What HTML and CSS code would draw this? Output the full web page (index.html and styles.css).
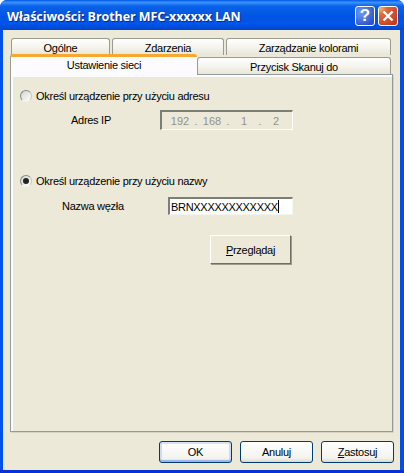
FILE: index.html
```html
<!DOCTYPE html>
<html lang="pl">
<head>
    <meta charset="UTF-8">
    <title>Właściwości: Brother MFC-xxxxxx LAN</title>
    <link rel="stylesheet" href="styles.css">
</head>
<body>
    <div class="window">
        <div class="titlebar">
            <span class="title">Właściwości: Brother MFC-xxxxxx LAN</span>
            <div class="title-buttons">
                <div class="cap-btn cap-help">?</div>
                <div class="cap-btn cap-close">
                    <svg width="14" height="14" viewBox="0 0 14 14"><path d="M2.5 2.5 L11.5 11.5 M11.5 2.5 L2.5 11.5" stroke="#fff" stroke-width="2.4" fill="none"/></svg>
                </div>
            </div>
        </div>
        <div class="client">
            <div class="tabs">
                <div class="tab-row back">
                    <div class="tab tab-general">Ogólne</div>
                    <div class="tab tab-events">Zdarzenia</div>
                    <div class="tab tab-colors">Zarządzanie kolorami</div>
                </div>
                <div class="tab-row front">
                    <div class="tab tab-network active">Ustawienie sieci</div>
                    <div class="tab tab-scan">Przycisk Skanuj do</div>
                </div>
            </div>
            <div class="panel">
                <div class="radio-row first">
                    <span class="radio"></span>
                    <span>Określ urządzenie przy użyciu adresu</span>
                </div>
                <div class="field-row ip-row">
                    <span class="field-label">Adres IP</span>
                    <div class="ip-box">
                        <span>192</span><i>.</i><span>168</span><i>.</i><span>1</span><i>.</i><span>2</span>
                    </div>
                </div>
                <div class="radio-row second">
                    <span class="radio checked"></span>
                    <span>Określ urządzenie przy użyciu nazwy</span>
                </div>
                <div class="field-row name-row">
                    <span class="field-label">Nazwa węzła</span>
                    <div class="name-box">BRNXXXXXXXXXXXX<span class="caret"></span></div>
                </div>
                <div class="browse-row">
                    <button class="btn browse"><u>P</u>rzeglądaj</button>
                </div>
            </div>
            <div class="footer">
                <button class="btn default">OK</button>
                <button class="btn">Anuluj</button>
                <button class="btn"><u>Z</u>astosuj</button>
            </div>
        </div>
    </div>
</body>
</html>
```

FILE: styles.css
```css
* {
    box-sizing: border-box;
    margin: 0;
    padding: 0;
}

body {
    width: 404px;
    height: 473px;
    overflow: hidden;
    font-family: "Liberation Sans", Arial, sans-serif;
    font-size: 11px;
    letter-spacing: -0.28px;
    color: #000;
}

.window {
    width: 404px;
    height: 473px;
    display: flex;
    flex-direction: column;
    background: #0050ea;
    border-bottom: 3px solid #0831d9;
    border-radius: 7px 7px 0 0;
    overflow: hidden;
}

.titlebar {
    height: 30px;
    flex: none;
    display: flex;
    align-items: center;
    justify-content: space-between;
    padding: 0 6px 0 7px;
    background: linear-gradient(to bottom, #0058e6 0%, #3a93ff 8%, #0a62e8 20%, #0054e3 55%, #0055eb 80%, #0046c8 100%);
}

.title {
    color: #fff;
    font-family: "Open Sans", "Liberation Sans", sans-serif;
    font-weight: 700;
    font-size: 12.5px;
    letter-spacing: -0.08px;
    padding-top: 2px;
    text-shadow: 1px 1px 0 #0a2a8c;
}

.title-buttons {
    display: flex;
    gap: 3px;
    padding-top: 1px;
}

.cap-btn {
    width: 20px;
    height: 20px;
    border: 1px solid #fff;
    border-radius: 3px;
    display: flex;
    align-items: center;
    justify-content: center;
}

.cap-help {
    background: radial-gradient(circle at 30% 30%, #6f9bf0, #2a55cf 80%);
    color: #fff;
    font-weight: 700;
    font-size: 17px;
    letter-spacing: 0;
}

.cap-close {
    background: radial-gradient(circle at 10% 10%, #f5b06a 0, #e2683f 25%, #c83d1c 85%);
}

.client {
    flex: 1;
    margin: 0 4px 0 3px;
    background: #ece9d8;
    padding: 8px 7px 0 7px;
    display: flex;
    flex-direction: column;
}

.tab-row {
    display: flex;
    position: relative;
}

.back {
    height: 17px;
    padding-left: 1px;
    gap: 2px;
}

.front {
    height: 19px;
}

.tab {
    text-align: center;
    background: linear-gradient(to bottom, #fff, #f3f2ea 60%, #e8e6d8);
    border: 1px solid #9c9b8f;
    border-bottom: none;
    border-radius: 3px 3px 0 0;
    padding-top: 2px;
    line-height: 14px;
}

.tab-general { width: 99px; }
.tab-events { width: 112px; }
.tab-colors { width: 165px; }
.tab-network { width: 187px; }
.tab-scan { width: 194px; margin-top: 2px; }

.tab.active {
    background: #fcfcfe;
    border-top: 3px solid #f7a92f;
    border-left-color: #9c9b8f;
    border-right: none;
    margin-top: -1px;
    height: 21px;
    padding-top: 1px;
    position: relative;
    z-index: 1;
}

.panel {
    width: 383px;
    height: 358px;
    flex: none;
    border: 1px solid #919b9c;
    background: #ece9d8;
    box-shadow: inset 2px 2px 0 #fcfcfe, 1px 1px 0 #d6d3c2;
    padding: 0 0 0 9px;
    display: flex;
    flex-direction: column;
}

.radio-row {
    display: flex;
    align-items: center;
    gap: 4px;
    height: 14px;
}

.radio-row.first { margin-top: 14px; }
.radio-row.second { margin-top: 44px; }

.radio {
    position: relative;
    width: 12px;
    height: 12px;
    border-radius: 50%;
    border: 1px solid;
    border-color: #7f8a90 #c8c6ba #f4f3ec #7f8a90;
    background: linear-gradient(135deg, #d8d5c8, #fff);
    flex: none;
}

.radio.checked::after {
    content: "";
    position: absolute;
    left: 2px;
    top: 2px;
    width: 6px;
    height: 6px;
    border-radius: 50%;
    background: #222;
}

.field-row {
    display: flex;
    align-items: center;
}

.ip-row {
    margin-top: 7px;
    padding-left: 51px;
}

.ip-row .field-label { width: 89px; }

.ip-box {
    width: 133px;
    height: 20px;
    border: 2px solid #7b7f76;
    border-right: 1px solid #fff;
    border-bottom: 1px solid #fff;
    color: #949288;
    display: flex;
    align-items: center;
    padding-left: 5px;
    letter-spacing: 0;
}

.ip-box span {
    width: 26px;
    text-align: center;
}

.ip-box i {
    width: 6px;
    font-style: normal;
    text-align: center;
}

.name-row {
    margin-top: 9px;
    padding-left: 42px;
}

.name-row .field-label { width: 106px; }

.name-box {
    width: 125px;
    height: 18px;
    background: #fff;
    border: 2px solid #7b7f76;
    border-right: 1px solid #f5f4ee;
    border-bottom: 1px solid #f5f4ee;
    padding-left: 1px;
    line-height: 16px;
    overflow: hidden;
    white-space: nowrap;
    display: flex;
    letter-spacing: -0.3px;
}

.caret {
    width: 1px;
    height: 13px;
    margin: 1px 0 0 0;
    background: #000;
}

.browse-row {
    margin-top: 20px;
    padding-left: 190px;
}

.btn {
    font-family: inherit;
    font-size: inherit;
    letter-spacing: inherit;
    color: #000;
    width: 73px;
    height: 22px;
    border: 1px solid #003c74;
    border-radius: 3px;
    background: linear-gradient(to bottom, #fff, #f4f3ee 80%, #dcd8cc);
}

.browse {
    width: 81px;
    height: 29px;
    border: 1px solid #fff;
    border-right-color: #716f64;
    border-bottom-color: #716f64;
    border-radius: 0;
    background: #ece9d8;
    box-shadow: 1px 1px 0 #9d9b90;
}

.default {
    box-shadow: inset 0 -2px 0 #9cb7e8, inset 2px 0 0 #cedbf5, inset -2px 0 0 #cedbf5, inset 0 2px 0 #d6e2f8;
}

.footer {
    display: flex;
    justify-content: flex-end;
    gap: 8px;
    margin-top: 9px;
    margin-right: -1px;
}
```
